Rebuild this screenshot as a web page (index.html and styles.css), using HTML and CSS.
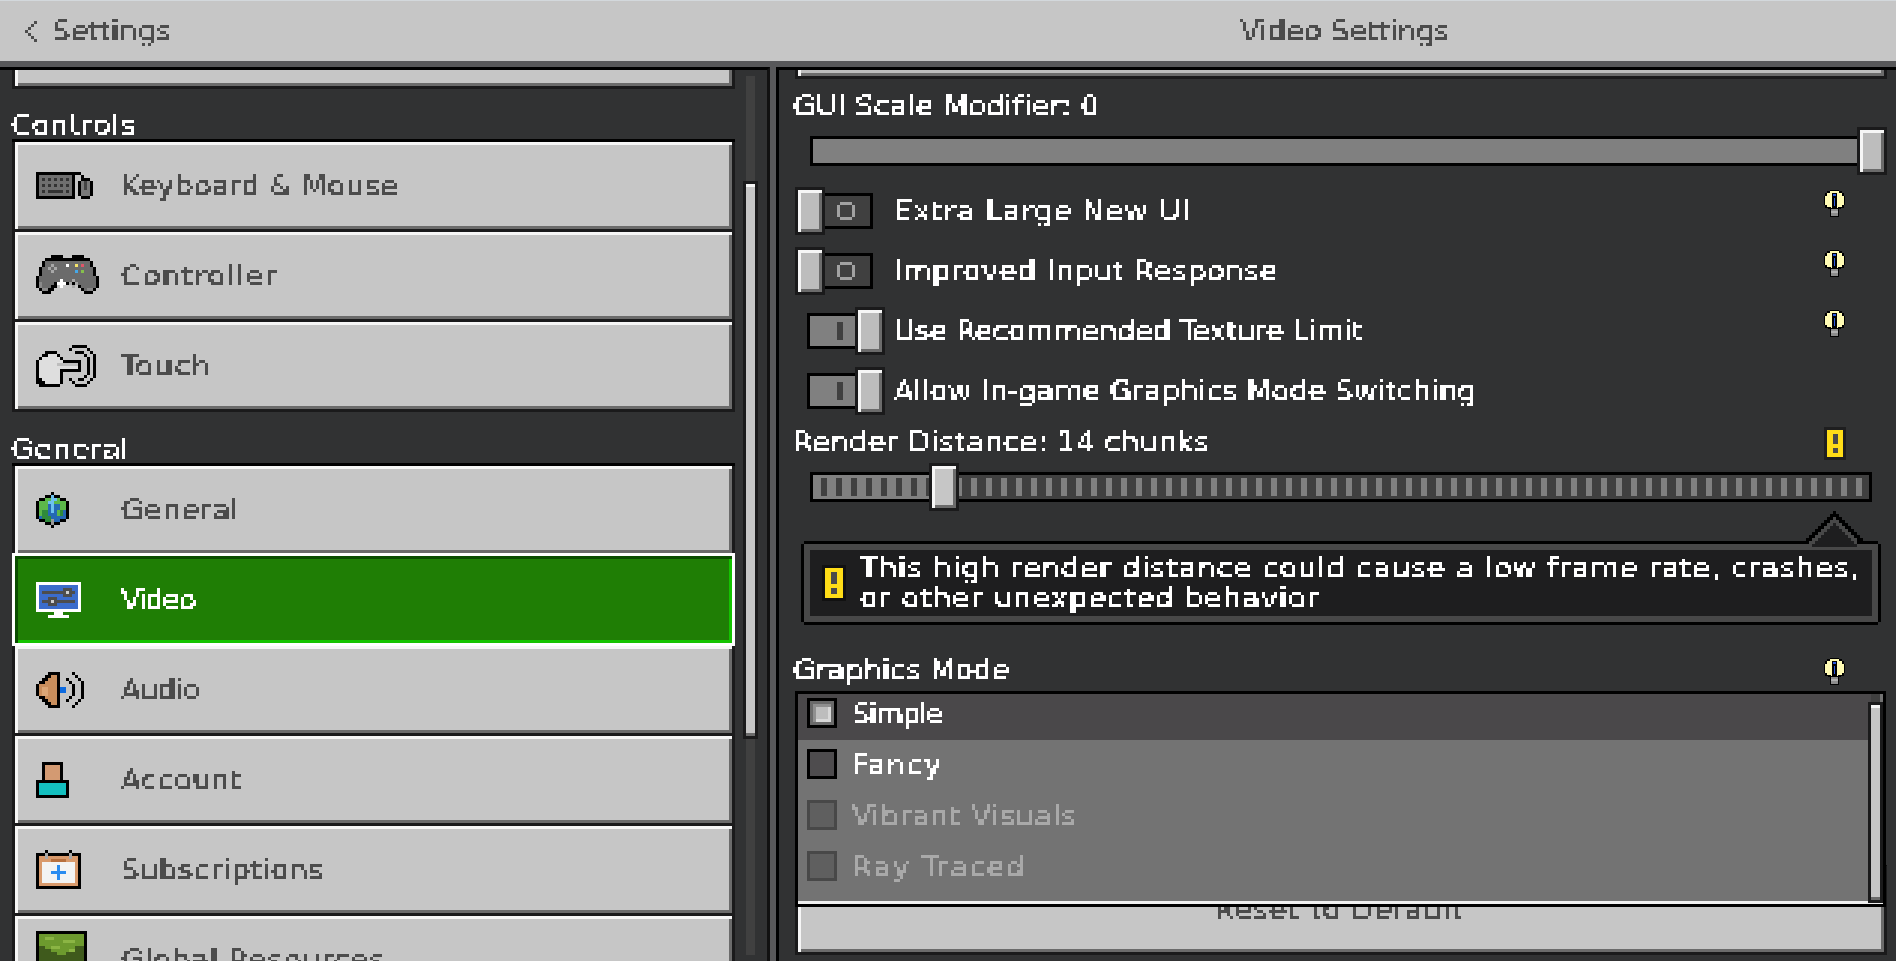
FILE: index.html
```html
<!DOCTYPE html>
<html lang="en">
<head>
<meta charset="utf-8">
<title>Video Settings</title>
<link rel="stylesheet" href="styles.css">
</head>
<body>
<svg class="defs" width="0" height="0" aria-hidden="true">
  <filter id="px" x="0" y="-30%" width="100%" height="160%" color-interpolation-filters="sRGB">
    <feFlood x="1" y="1" width="1" height="1"/>
    <feComposite width="3" height="3"/>
    <feTile result="grid"/>
    <feComposite in="SourceGraphic" in2="grid" operator="in"/>
    <feMorphology operator="dilate" radius="1"/>
    <feComponentTransfer><feFuncA type="discrete" tableValues="0 1 1 1"/></feComponentTransfer>
  </filter>
</svg>

<header class="topbar">
  <div class="topbar-left">
    <svg class="chevron" viewBox="0 0 15 21" width="15" height="21"><path d="M12 0h3v3h-3zM9 3h3v3H9zM6 6h3v3H6zM3 9h3v3H3zM6 12h3v3H6zM9 15h3v3H9zM12 18h3v3h-3z" fill="#4c4c4c"/></svg>
    <span class="t t-dark">Settings</span>
  </div>
  <div class="topbar-title"><span class="t t-dark">Video Settings</span></div>
</header>

<main class="main">
  <nav class="nav">
    <div class="nav-list">
      <div class="btn btn-cut"></div>
      <div class="group-label"><span class="t t-light ls-e">Controls</span></div>
      <div class="group">
        <a class="btn nav-item">
          <svg class="ico" viewBox="0 0 19 9" width="57" height="27" shape-rendering="crispEdges">
            <path d="M0 0h13v9H0z" fill="#000"/><path d="M1 1h11v7H1z" fill="#6f6f6f"/>
            <path d="M2 2h1v1H2zM4 2h1v1H4zM6 2h1v1H6zM8 2h1v1H8zM10 2h1v1h-1zM2 4h1v1H2zM4 4h1v1H4zM6 4h1v1H6zM8 4h1v1H8zM10 4h1v1h-1zM2 6h1v1H2zM4 6h5v1H4zM10 6h1v1h-1z" fill="#333"/>
            <path d="M13 0h2v1h1v1h2v1h1v5h-1v1h-3v-1h-1V3h1V2h0V1h-2z" fill="#000"/>
            <path d="M15 3h3v5h-3z" fill="#7a7a7a"/><path d="M16 3h1v3h-1z" fill="#444"/>
          </svg>
          <span class="t t-dark ls-i">Keyboard &amp; Mouse</span>
        </a>
        <a class="btn nav-item">
          <svg class="ico ico-pad" viewBox="0 0 21 14" width="63" height="42" shape-rendering="crispEdges">
            <path d="M5 0h4v1h3V0h4v1h2v1h1v2h1v3h1v4h-1v1h-1v1h-3v-1h-1v-1h-1v-1H7v1H6v1H5v1H2v-1H1v-1H0V7h1V4h1V2h1V1h2z" fill="#000"/>
            <path d="M3 2h15v2h1v3h1v4h-1v1h-3v-1h-1v-1h-1V9H6v1H5v1H4v1H2v-1H1V7h1V4h1z" fill="#6b6b6b"/>
            <path d="M1 9h1v2h2v1H2v-1H1zM17 11h2v1h-2z" fill="#8a8a8a"/>
            <path d="M5 3h1v1H5zM4 4h1v1H4zM6 4h1v1H6zM5 5h1v1H5zM12 8h1v1h-1zM11 9h1v1h-1zM13 9h1v1h-1zM12 10h1v1h-1z" fill="#a8a8a8"/>
            <path d="M10 3h1v1h-1zM8 8h1v1H8zM7 9h3v1H7zM8 10h1v1H8z" fill="#fff"/>
            <path d="M13 3h1v1h-1z" fill="#f4e46a"/><path d="M15 3h1v1h-1z" fill="#e0566a"/>
            <path d="M13 5h1v1h-1z" fill="#46a8e8"/><path d="M15 5h1v1h-1z" fill="#86c04c"/>
          </svg>
          <span class="t t-dark ls-g">Controller</span>
        </a>
        <a class="btn nav-item">
          <svg class="ico ico-touch" viewBox="0 0 20 14" width="60" height="42" shape-rendering="crispEdges">
            <path d="M12 0h5v1h-5zM11 1h1v1h-1zM17 1h1v1h-1zM18 2h1v1h-1zM19 3h1v8h-1zM18 11h1v1h-1zM17 12h1v1h-1zM13 13h4v1h-4zM12 12h1v1h-1zM11 11h1v1h-1zM13 2h3v1h-3zM16 3h1v1h-1zM17 4h1v6h-1zM16 10h1v1h-1zM14 11h2v1h-2z" fill="#000"/>
            <path d="M3 2h4v1h1v1h1v1h6v4h-6v1H9v3H8v2H2v-1H1v-1H0V5h1V4h1V3h1z" fill="#000"/>
            <path d="M3 3h4v1h1v1h1v1h5v2H8v5H3v-1H2v-1H1V5h1V4h2V3z" fill="#dedede"/>
            <path d="M7 6h7v1H7z" fill="#bdbdbd"/>
          </svg>
          <span class="t t-dark ls-g">Touch</span>
        </a>
      </div>

      <div class="group-label group-label-wide"><span class="t t-light ls-e">General</span></div>
      <div class="group">
        <a class="btn nav-item">
          <svg class="ico ico-globe" viewBox="0 0 11 12" width="33" height="36" shape-rendering="crispEdges">
            <path d="M5 0h1v1h2v1h2v1h1v6h-1v1H8v1H6v1H5v-1H3v-1H1V9H0V3h1V2h2V1h2z" fill="#000"/>
            <path d="M3 2h5v1h2v6H8v1H6v1H5v-1H3V9H1V3h2z" fill="#2468b4"/>
            <path d="M3 2h2v2H4v2H2v2H1V3h2zM6 2h2v1h2v3H9v2H7V6h1V4H6z" fill="#5cb84a"/>
            <path d="M5 1h1v1h1v1H6v4H5V4H4V3h1z" fill="#6cc0ee"/>
            <path d="M2 6h2v2h1v2H3V9H2zM8 6h1v2H8z" fill="#2f8a3c"/>
            <path d="M5 9h1v2H5z" fill="#9a9a9a"/>
          </svg>
          <span class="t t-dark ls-e">General</span>
        </a>
        <a class="btn nav-item nav-item-active">
          <svg class="ico ico-video" viewBox="0 0 15 12" width="45" height="36" shape-rendering="crispEdges">
            <path d="M0 0h15v10H0zM6 10h3v1H6zM4 11h7v1H4z" fill="#fff"/>
            <path d="M1 1h13v8H1z" fill="#3b6ccb"/>
            <path d="M2 3h11v1H2zM9 2h3v3H9zM2 6h11v1H2zM4 5h3v3H4z" fill="#4d4d4d"/>
            <path d="M10 3h1v1h-1zM5 6h1v1H5z" fill="#cfcfcf"/>
          </svg>
          <span class="t t-light ls-a">Video</span>
        </a>
        <a class="btn nav-item">
          <svg class="ico ico-audio" viewBox="0 0 16 12" width="48" height="36" shape-rendering="crispEdges">
            <path d="M4 0h4v12H4v-1H3v-1H2V9H1V8H0V4h1V3h1V2h1V1h1z" fill="#000"/>
            <path d="M5 1h2v10H5v-1H4V9H3V8H1V4h2V3h1V2h1z" fill="#c98e5c"/>
            <path d="M2 5h2v3H2z" fill="#dba676"/>
            <path d="M8 5h2v2H8z" fill="#0e6be0"/>
            <path d="M10 2h1v1h-1zM11 3h1v1h-1zM12 4h1v4h-1zM11 8h1v1h-1zM10 9h1v1h-1zM12 0h1v1h-1zM13 1h1v1h-1zM14 2h1v1h-1zM15 3h1v6h-1zM14 9h1v1h-1zM13 10h1v1h-1zM12 11h1v1h-1z" fill="#000"/>
          </svg>
          <span class="t t-dark ls-b">Audio</span>
        </a>
        <a class="btn nav-item">
          <svg class="ico ico-account" viewBox="0 0 11 12" width="33" height="36" shape-rendering="crispEdges">
            <path d="M2 0h7v6h2v6H0V6h2z" fill="#000"/>
            <path d="M3 1h5v5H3z" fill="#d39a72"/>
            <path d="M1 7h9v4H1z" fill="#14c0c0"/>
          </svg>
          <span class="t t-dark ls-e">Account</span>
        </a>
        <a class="btn nav-item">
          <svg class="ico ico-subs" viewBox="0 0 15 13" width="45" height="39" shape-rendering="crispEdges">
            <path d="M3 0h1v1H3zM11 0h1v1h-1zM0 1h15v12H0z" fill="#000"/>
            <path d="M1 2h13v10H1z" fill="#d99a6c"/>
            <path d="M3 1h1v2H3zM11 1h1v2h-1z" fill="#a8a8a8"/>
            <path d="M5 3h5v1H5z" fill="#b8703e"/>
            <path d="M2 4h11v7H2z" fill="#f3f3f3"/>
            <path d="M5 7h5v1H5zM7 5h1v5H7z" fill="#2a8cf0"/>
          </svg>
          <span class="t t-dark ls-e">Subscriptions</span>
        </a>
        <a class="btn nav-item">
          <svg class="ico ico-grass" viewBox="0 0 17 17" width="51" height="51" shape-rendering="crispEdges">
            <path d="M0 0h17v17H0z" fill="#000"/>
            <path d="M1 1h15v15H1z" fill="#6d9a2e"/>
            <path d="M3 2h3v1H3zM9 3h4v1H9zM5 5h3v1H5zM11 6h3v1h-3z" fill="#8bb544"/>
            <path d="M1 5h2v1h2v1h2v1h3V7h3V5h3v11H1z" fill="#3f5a1c"/>
            <path d="M7 10h3v6H7z" fill="#4a3220"/>
          </svg>
          <span class="t t-dark ls-f">Global Resources</span>
        </a>
      </div>
    </div>
    <div class="nav-scroll"><div class="scroll-thumb nav-thumb"></div></div>
  </nav>

  <div class="divider"></div>

  <section class="pane">
    <div class="btn btn-cut-thin"></div>

    <div class="label-row label-row-gui"><span class="t t-light ls-c">GUI Scale Modifier: 0</span></div>
    <div class="slider-plain">
      <div class="plain-track"></div>
      <div class="thumb"></div>
    </div>

    <div class="toggle-row">
      <div class="toggle"><div class="thumb"></div><div class="switch switch-off"><i class="ring"></i></div></div>
      <span class="t t-light ls-h">Extra Large New UI</span>
      <svg class="bulb" viewBox="0 0 21 27" width="21" height="27" shape-rendering="crispEdges"><use href="#bulb-art"/></svg>
    </div>
    <div class="toggle-row">
      <div class="toggle"><div class="thumb"></div><div class="switch switch-off"><i class="ring"></i></div></div>
      <span class="t t-light ls-e">Improved Input Response</span>
      <svg class="bulb" viewBox="0 0 21 27" width="21" height="27" shape-rendering="crispEdges"><use href="#bulb-art"/></svg>
    </div>
    <div class="toggle-row">
      <div class="toggle toggle-on"><div class="switch switch-on"><i class="bar"></i></div><div class="thumb"></div></div>
      <span class="t t-light ls-d">Use Recommended Texture Limit</span>
      <svg class="bulb" viewBox="0 0 21 27" width="21" height="27" shape-rendering="crispEdges"><use href="#bulb-art"/></svg>
    </div>
    <div class="toggle-row">
      <div class="toggle toggle-on"><div class="switch switch-on"><i class="bar"></i></div><div class="thumb"></div></div>
      <span class="t t-light">Allow In-game Graphics Mode Switching</span>
    </div>

    <div class="label-row label-row-render">
      <span class="t t-light ls-i">Render Distance: 14 chunks</span>
      <svg class="warn" viewBox="0 0 22 33" width="22" height="33" shape-rendering="crispEdges">
        <path d="M0 0h22v33H0z" fill="#1e1e1f"/><path d="M3 3h16v27H3z" fill="#ffdd17"/><path d="M9 7h5v10H9zM9 21h5v5H9z" fill="#4a4a4a"/>
      </svg>
    </div>
    <div class="slider-ticks">
      <div class="ticks ticks-done"></div>
      <div class="ticks ticks-rest"></div>
      <div class="thumb thumb-float"></div>
    </div>

    <div class="tip-wrap">
      <svg class="tip-arrow" viewBox="0 0 21 13" width="63" height="39" shape-rendering="crispEdges">
        <path d="M10 0h1v1h1v1h1v1h1v1h1v1h1v1h1v1h1v1h1v1h1v2H1v-2h1v-1h1v-1h1v-1h1v-1h1v-1h1v-1h1v-1h1v-1h1z" fill="#000"/>
        <path transform="translate(0 2)" d="M10 0h1v1h1v1h1v1h1v1h1v1h1v1h1v1h1v3H2V8h1V7h1V6h1V5h1V4h1V3h1V2h1V1h1z" fill="#484848"/>
        <path transform="translate(0 4)" d="M10 0h1v1h1v1h1v1h1v1h1v1h1v1h1v1h1v1H2V8h1V7h1V6h1V5h1V4h1V3h1V2h1V1h1z" fill="#1e1e1f"/>
      </svg>
      <div class="tip">
        <div class="tip-inner">
          <svg class="warn-big" viewBox="0 0 24 36" width="24" height="36" shape-rendering="crispEdges">
            <path d="M0 0h24v36H0z" fill="#111"/><path d="M3 3h18v30H3z" fill="#ffdd17"/><path d="M9 7h6v12H9zM9 23h6v6H9z" fill="#4a4a4a"/>
          </svg>
          <div class="tip-text">
            <span class="t t-light t-tip">This high render distance could cause a low frame rate, crashes,</span>
            <span class="t t-light t-tip">or other unexpected behavior</span>
          </div>
        </div>
      </div>
    </div>

    <div class="label-row label-row-mode">
      <span class="t t-light">Graphics Mode</span>
      <svg class="bulb bulb-mode" viewBox="0 0 21 27" width="21" height="27" shape-rendering="crispEdges"><use href="#bulb-art"/></svg>
    </div>

    <div class="choice-box">
      <div class="choice choice-selected"><i class="check check-on"><b></b></i><span class="t t-light ls-a">Simple</span></div>
      <div class="choice"><i class="check"></i><span class="t t-light ls-g">Fancy</span></div>
      <div class="choice"><i class="check check-off"></i><span class="t t-off ls-e">Vibrant Visuals</span></div>
      <div class="choice"><i class="check check-off"></i><span class="t t-off ls-g">Ray Traced</span></div>
      <div class="choice-scroll"><div class="scroll-thumb"></div></div>
    </div>
    <div class="btn reset"><span class="t t-dark ls-f">Reset to Default</span></div>
  </section>
</main>

<svg class="defs" width="0" height="0" aria-hidden="true">
  <g id="bulb-art">
    <path d="M6 0h9v1h3v2h2v3h1v9h-1v3h-3v1h-2v8H6v-8H4v-1H1v-3H0V6h1V3h2V1h3z" fill="#000"/>
    <path d="M6 1h9v2h3v3h2v9h-2v2h-4v1H7v-1H3v-2H1V6h2V3h3z" fill="#fffbb4"/>
    <path d="M8 3h5v15H8z" fill="#000"/>
    <path d="M9 4h3v2H9zM10 8h1v8h-1z" fill="#2a5ae0"/>
    <path d="M7 19h7v7H7z" fill="#8c8c8c"/><path d="M7 21h7v2H7z" fill="#b0b0b0"/>
  </g>
</svg>
</body>
</html>
```
FILE: styles.css
```css
* { box-sizing: border-box; }
html, body { margin: 0; height: 961px; overflow: hidden; }
body { width: 1896px; background: #313233; display: flex; flex-direction: column; font-family: "DejaVu Sans", sans-serif; }
.defs { position: absolute; }

/* text */
.t { display: inline-block; font: 29px/36px "DejaVu Sans", sans-serif; letter-spacing: 0; white-space: pre; filter: url(#px); }
.t-dark { color: #4c4c4c; }
.t-light { color: #fff; }
.t-off { color: #a9a9a9; }
.t-tip { display: block; line-height: 30px; height: 30px; letter-spacing: 0.95px; }
.ls-a { letter-spacing: -1.5px; }
.ls-b { letter-spacing: -0.8px; }
.ls-c { letter-spacing: 0.15px; }
.ls-d { letter-spacing: -0.3px; }
.ls-e { letter-spacing: 0.6px; }
.ls-f { letter-spacing: 0.9px; }
.ls-g { letter-spacing: 1.5px; }
.ls-h { letter-spacing: 1px; }
.ls-i { letter-spacing: 0.35px; }

/* top bar */
.topbar { height: 67px; flex: none; display: flex; background: #c6c6c6; border-top: 1px solid #d3d8dc; border-bottom: 6px solid #58585a; }
.topbar-left { width: 776px; display: flex; align-items: center; padding-left: 22px; gap: 15px; }
.topbar-title { flex: 1; display: flex; align-items: center; justify-content: center; padding-left: 18px; }

/* shared bevel */
.btn { display: block; background: #c6c6c6; border: 3px solid #1a1a1b; border-top: 0; box-shadow: inset 3px 3px 0 #f6f6f6, inset -3px -3px 0 #6b6b6b; }

/* main */
.main { flex: 1; display: flex; min-height: 0; overflow: hidden; }
.nav { width: 770px; flex: none; display: flex; padding-left: 12px; border-top: 3px solid #000; border-right: 3px solid #111; overflow: hidden; }
.nav-list { width: 723px; flex: none; }
.btn-cut { height: 19px; box-shadow: inset 3px 0 0 #f6f6f6, inset -3px -3px 0 #6b6b6b; }
.group-label { height: 50px; display: flex; align-items: flex-end; }
.group-label .t { line-height: 28px; margin-left: -1px; }
.group-label-wide { height: 51px; }
.group { border-top: 3px solid #000; }
.nav-item { height: 90px; display: flex; align-items: center; padding-left: 21px; position: relative; }
.ico { position: absolute; left: 21px; }
.nav-item .t { margin-left: 85px; margin-top: 1px; }
.nav-item-active { background: #1f7e05; border: 3px solid #fff; height: 93px; margin-top: -3px; box-shadow: inset 3px 3px 0 #0a4d00, inset -3px -3px 0 #14c300; position: relative; z-index: 1; }
.ico-grass { top: 15px; }

/* nav scroller */
.nav-scroll { width: 9px; margin-left: 11px; margin-top: 6px; height: 879px; background: #404040; }
.scroll-thumb { background: #c6c6c6; border: 3px solid #1a1a1b; box-shadow: inset 0 3px 0 #f6f6f6, inset 0 -3px 0 #6b6b6b; }
.nav-thumb { width: 15px; margin-left: -3px; height: 558px; margin-top: 105px; }

.divider { width: 6px; flex: none; background: #58585a; }

/* right pane */
.pane { flex: 1; min-width: 0; display: flex; flex-direction: column; padding: 0 9px 0 16px; border-top: 3px solid #000; border-left: 3px solid #000; }
.btn-cut-thin { height: 9px; flex: none; background: #bdbdbd; box-shadow: inset 3px 0 0 #f6f6f6, inset -3px -3px 0 #6b6b6b; }

.label-row { display: flex; flex: none; height: 48px; }
.label-row .t { margin-left: -2px; }
.label-row-gui { align-items: flex-start; padding-top: 9px; }
.label-row-render { padding-top: 9px; position: relative; }
.label-row-mode { height: 66px; padding-top: 27px; }

.thumb { width: 30px; height: 48px; flex: none; background: #bdbdbd; border: 3px solid #1a1a1b; box-shadow: inset 3px 3px 0 #f6f6f6, inset -3px -3px 0 #6b6b6b; position: relative; }

.slider-plain { display: flex; align-items: center; height: 48px; margin-left: 15px; flex: none; }
.plain-track { flex: 1; height: 30px; background: #808080; border: 3px solid #000; border-right: 0; }

.toggle-row { display: flex; align-items: center; height: 48px; margin-top: 12px; flex: none; }
.toggle { width: 90px; margin-right: 9px; display: flex; align-items: center; flex: none; }
.toggle-on { padding-left: 12px; }
.switch { width: 48px; height: 36px; border: 3px solid #000; display: flex; align-items: center; flex: none; }
.switch-off { background: #404040; border-left: 0; padding-left: 12px; }
.switch-on { background: #808080; border-right: 0; padding-left: 27px; }
.ring { width: 18px; height: 18px; background: linear-gradient(#a2a2a2, #a2a2a2) 3px 0 / 12px 3px no-repeat, linear-gradient(#a2a2a2, #a2a2a2) 3px 15px / 12px 3px no-repeat, linear-gradient(#a2a2a2, #a2a2a2) 0 3px / 3px 12px no-repeat, linear-gradient(#a2a2a2, #a2a2a2) 15px 3px / 3px 12px no-repeat; display: block; }
.bar { width: 6px; height: 18px; background: #404040; display: block; }
.bulb { margin-left: auto; margin-right: 42px; align-self: flex-start; margin-top: 3px; }
.warn { margin-left: auto; margin-right: 41px; margin-top: 3px; }
.bulb-mode { margin-top: 6px; }

.slider-ticks { display: flex; height: 30px; margin: 9px 15px; border: 3px solid #000; position: relative; flex: none; }
.ticks { height: 24px; background-repeat: repeat-x; background-size: 15px 18px; }
.ticks-done { width: 116px; background-color: #808080; background-image: linear-gradient(90deg, #404040 6px, transparent 6px); background-position: 8px 3px; }
.ticks-rest { flex: 1; background-color: #404040; background-image: linear-gradient(90deg, #808080 6px, transparent 6px); background-position: 12px 3px; }
.thumb-float { position: absolute; left: 116px; top: -12px; background: #c6c6c6; }

.tip-wrap { position: relative; margin: 30px 6px 0; height: 84px; flex: none; }
.tip-arrow { position: absolute; right: 15px; top: -30px; z-index: 1; }
.tip { height: 84px; background: #000; padding: 3px; clip-path: polygon(3px 0, calc(100% - 3px) 0, calc(100% - 3px) 3px, 100% 3px, 100% calc(100% - 3px), calc(100% - 3px) calc(100% - 3px), calc(100% - 3px) 100%, 3px 100%, 3px calc(100% - 3px), 0 calc(100% - 3px), 0 3px, 3px 3px); }
.tip-inner { height: 78px; background: #1e1e1f; border: 6px solid #484848; display: flex; align-items: center; padding-left: 12px; gap: 14px; }
.warn-big { flex: none; }

.choice-box { position: relative; z-index: 1; height: 216px; flex: none; margin-right: 1px; background: #737373; border: 3px solid #000; border-bottom: 0; box-shadow: inset 0 -3px 0 #000, inset 0 -6px 0 #f0f0f0; padding: 0 6px 0 3px; }
.choice { height: 51px; display: flex; align-items: center; padding: 1px 0 0 6px; gap: 15px; }
.choice .t { margin-top: 2px; }
.choice-selected { height: 46px; margin: 0 0 -2px -3px; padding: 0 0 8px 9px; background: #4a484a; }
.check { width: 30px; height: 30px; border: 3px solid #000; background: #4e4c4e; display: block; flex: none; }
.check-on { background: #6a6a6a; padding: 3px; }
.check-on b { display: block; width: 18px; height: 18px; background: #bdbdbd; box-shadow: inset 3px 3px 0 #8f8f8f, inset -3px -3px 0 #d8d8d8; }
.check-off { background: #5f5f5f; border-color: #484848; }
.choice-scroll { position: absolute; right: 3px; top: 0; width: 9px; height: 205px; background: #3f3f3f; }
.choice-scroll .scroll-thumb { width: 15px; margin-left: -3px; height: 201px; margin-top: 8px; }

.reset { height: 90px; margin-top: -42px; flex: none; border-top: 3px solid #000; display: flex; align-items: center; justify-content: center; padding-right: 4px; }
```
